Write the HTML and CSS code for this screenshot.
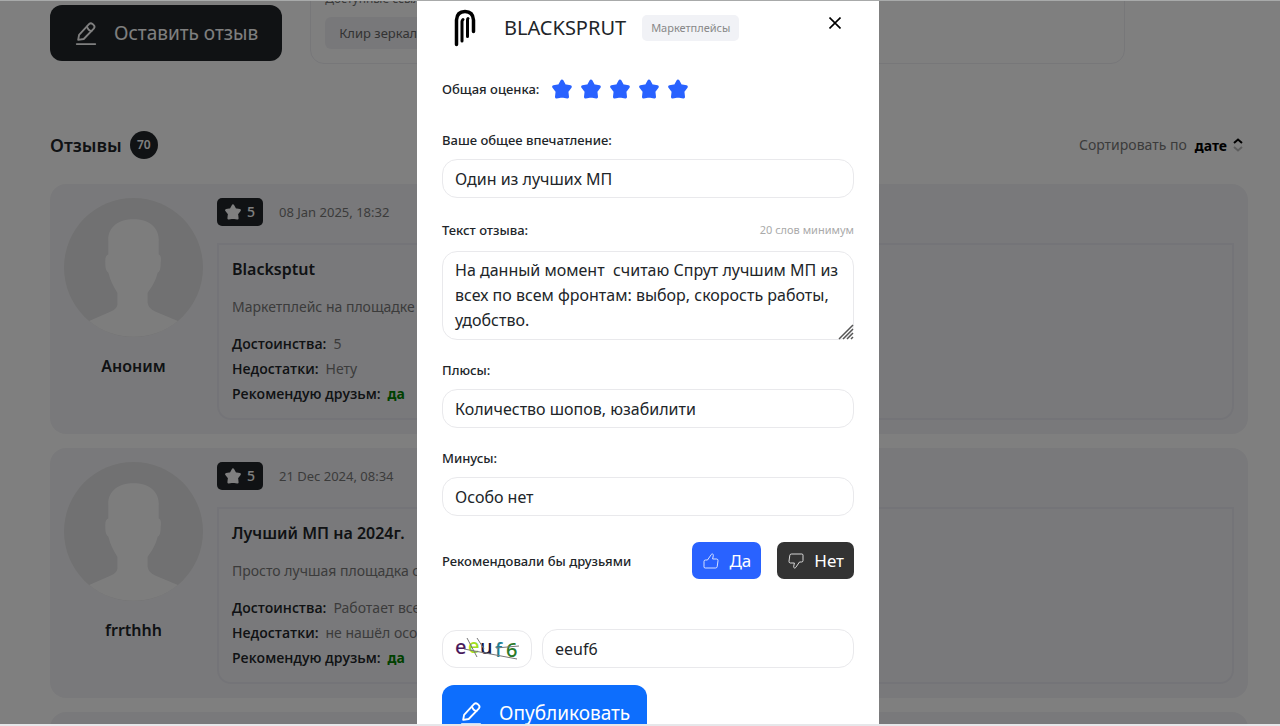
FILE: index.html
```html
<!DOCTYPE html>
<html lang="ru">
<head>
  <meta charset="UTF-8">
  <meta name="viewport" content="width=device-width, initial-scale=1.0">
  <title>BLACKSPRUT - Отзывы</title>
  <link rel="stylesheet" href="styles.css">
</head>
<body>
  <!-- shared icons -->
  <svg class="sprite" aria-hidden="true">
    <symbol id="star" viewBox="0 0 20 20">
      <path d="M10 2 12.6 6.800 18.300 7.800 14.900 12.300 15.500 18 10 17 4.500 18 5.100 12.300 1.700 7.800 7.400 6.800Z" fill="currentColor" stroke="currentColor" stroke-width="3" stroke-linejoin="round"/>
    </symbol>
    <symbol id="pencil" viewBox="0 0 24 26">
      <g fill="none" stroke="currentColor" stroke-width="2" stroke-linecap="round" stroke-linejoin="round">
        <path d="M3.5 20.5 4.5 15 15.5 3.2Q17.2 1.6 19 3.2L20.6 4.8Q22 6.4 20.4 8.2L9.5 19.5Z"/>
        <path d="M13 6Q14.5 10.5 18 11"/>
        <path d="M2 25H22"/>
      </g>
    </symbol>
    <symbol id="thumb" viewBox="0 0 16 16">
      <path d="M1 8.500Q1 7 2.500 7H4.500L8.300 1.500Q8.700.8 9.500 1 10.600 1.300 10.300 2.600L9.600 6H13.600Q15.200 6.200 15 7.700L14.200 13.600Q14 15 12.500 15H2.200Q1 15 1 13.800Z" fill="none" stroke="currentColor" stroke-opacity="0.8" stroke-linejoin="round"/>
    </symbol>
    <symbol id="person" viewBox="0 0 138 138">
      <circle cx="69" cy="69" r="69" fill="#e2e2e4"/>
      <path d="M44 43C43 29 54 21 69 21S95 29 94 43V56Q97 57 96 64 96 73 93 74C91 83 86 90 83 94V104Q84 110 91 113L113 122A69 69 0 0 1 25 122L46 113Q54 110 53 104V94C49 88 46 82 44 74 41 72 41 67 41 62Q41 57 44 56Z" fill="#fbfbfb"/>
    </symbol>
  </svg>

  <main class="page">
    <div class="top">
      <button class="write-btn" type="button"><svg class="pencil"><use href="#pencil"/></svg>Оставить отзыв</button>
      <div class="links">
        <span>Доступные ссылки</span>
        <a class="mirror" href="#">Клир зеркало</a>
      </div>
    </div>

    <div class="reviews-head">
      <h2>Отзывы</h2>
      <span class="count">70</span>
      <div class="sort">Сортировать по
        <button type="button">дате
          <svg width="10" height="14" viewBox="0 0 10 14" fill="none" stroke-width="2">
            <path d="M1 5 5 1.5 9 5" stroke="#000"/>
            <path d="M1 9 5 12.5 9 9" stroke="#bbb"/>
          </svg>
        </button>
      </div>
    </div>

    <article class="review">
      <div class="author">
        <svg class="avatar"><use href="#person"/></svg>
        <b>Аноним</b>
      </div>
      <div class="content">
        <div class="meta"><span class="badge"><svg><use href="#star"/></svg>5</span><time>08 Jan 2025, 18:32</time></div>
        <div class="quote">
          <h3>Blacksptut</h3>
          <p>Маркетплейс на площадке с хорошим выбором</p>
          <div><b>Достоинства:</b>5</div>
          <div><b>Недостатки:</b>Нету</div>
          <div><b>Рекомендую друзьм:</b><span class="yes">да</span></div>
        </div>
      </div>
    </article>

    <article class="review">
      <div class="author">
        <svg class="avatar"><use href="#person"/></svg>
        <b>frrthhh</b>
      </div>
      <div class="content">
        <div class="meta"><span class="badge"><svg><use href="#star"/></svg>5</span><time>21 Dec 2024, 08:34</time></div>
        <div class="quote">
          <h3>Лучший МП на 2024г.</h3>
          <p>Просто лучшая площадка со всех сторон</p>
          <div><b>Достоинства:</b>Работает всегда</div>
          <div><b>Недостатки:</b>не нашёл особых</div>
          <div><b>Рекомендую друзьм:</b><span class="yes">да</span></div>
        </div>
      </div>
    </article>

    <article class="review"></article>
  </main>

  <div class="overlay">
    <form class="modal" role="dialog" aria-labelledby="modalTitle">
      <div class="modal-head">
        <svg class="logo" width="22" height="38" viewBox="0 0 22 38" fill="none" stroke="#000" stroke-linecap="round">
          <path d="M2.500 35.500V11Q3 2.500 11 2.500T19.500 11V22.500" stroke-width="3.500"/>
          <path d="M8 32V12.500Q8 11.500 9 10.500" stroke-width="3"/>
          <path d="M13.500 27.500V11Q13.500 10 14 9.500" stroke-width="3"/>
        </svg>
        <h1 id="modalTitle">BLACKSPRUT</h1>
        <span class="tag">Маркетплейсы</span>
        <button class="close" type="button" aria-label="Закрыть">
          <svg width="12" height="12" viewBox="0 0 12 12" stroke="#000" stroke-width="1.6"><path d="M0.5 0.5 11.5 11.5M11.5 0.5 0.5 11.5"/></svg>
        </button>
      </div>

      <div class="rate">
        <span class="label">Общая оценка:</span>
        <div class="stars">
          <button type="button" aria-label="1"><svg><use href="#star"/></svg></button>
          <button type="button" aria-label="2"><svg><use href="#star"/></svg></button>
          <button type="button" aria-label="3"><svg><use href="#star"/></svg></button>
          <button type="button" aria-label="4"><svg><use href="#star"/></svg></button>
          <button type="button" aria-label="5"><svg><use href="#star"/></svg></button>
        </div>
      </div>

      <div class="field">
        <label class="label" for="summary">Ваше общее впечатление:</label>
        <input type="text" id="summary" value="Один из лучших МП">
      </div>

      <div class="field">
        <div class="label-row">
          <label class="label" for="text">Текст отзыва:</label>
          <span class="hint">20 слов минимум</span>
        </div>
        <div class="area">
          <textarea id="text" rows="3" spellcheck="false">На данный момент  считаю Спрут лучшим МП из всех по всем фронтам: выбор, скорость работы, удобство.</textarea>
          <svg class="grip" width="16" height="16" viewBox="0 0 16 16" stroke="#555" stroke-width="1.5"><path d="M1 15 15 1M5 15 15 5M9 15 15 9M13 15 15 13"/></svg>
        </div>
      </div>

      <div class="field">
        <label class="label" for="pros">Плюсы:</label>
        <input type="text" id="pros" value="Количество шопов, юзабилити">
      </div>

      <div class="field">
        <label class="label" for="cons">Минусы:</label>
        <input type="text" id="cons" value="Особо нет">
      </div>

      <div class="recommend">
        <span class="label">Рекомендовали бы друзьями</span>
        <button class="vote vote-yes" type="button"><svg><use href="#thumb"/></svg>Да</button>
        <button class="vote vote-no" type="button"><svg class="down"><use href="#thumb"/></svg>Нет</button>
      </div>

      <div class="captcha">
        <div class="captcha-img">
          <svg width="66" height="26" viewBox="0 0 66 26">
            <g class="captcha-text">
              <text x="1" y="18" fill="#4a1a5c">e</text>
              <text x="14" y="17" fill="#a0e020">e</text>
              <text x="26" y="18" fill="#17153c">u</text>
              <text x="41" y="21" fill="#1f7f93">f</text>
              <text x="52" y="21" fill="#2a7a2a">6</text>
            </g>
            <path d="M10 13 63 23M13 2 23 21M23 2 30 13M42 12 65 10" fill="none" stroke="#777"/>
          </svg>
        </div>
        <input type="text" aria-label="Код с картинки" value="eeuf6">
      </div>

      <button class="submit" type="submit"><svg class="pencil"><use href="#pencil"/></svg>Опубликовать</button>
    </form>
  </div>
</body>
</html>
```
FILE: styles.css
```css
* {
  box-sizing: border-box;
}
body {
  margin: 0;
  height: 100vh;
  overflow: hidden;
  background: #fff;
  color: #212529;
  font-family: "Noto Sans", "Open Sans", sans-serif;
  font-size: 14px;
  line-height: 20px;
}
h1, h2, h3, p {
  margin: 0;
}
button, input, textarea {
  font-family: inherit;
  color: inherit;
  margin: 0;
}
button {
  border: none;
  background: none;
  padding: 0;
  cursor: pointer;
}
.sprite {
  display: none;
}

/* page */
.page {
  height: 100%;
  overflow: hidden;
  padding: 0 32px 0 50px;
}
.top {
  display: flex;
  align-items: flex-end;
  gap: 28px;
  height: 64px;
  margin-bottom: 65px;
}
.write-btn, .submit {
  display: flex;
  align-items: center;
  gap: 16px;
  height: 56px;
  padding: 0 24px;
  border-radius: 12px;
  background: #212529;
  color: #fff;
  font-size: 19px;
  white-space: nowrap;
}
.write-btn {
  margin-bottom: 3px;
}
.pencil {
  width: 24px;
  height: 24px;
}
.links {
  flex: 1;
  display: flex;
  flex-direction: column;
  align-items: flex-start;
  gap: 8px;
  margin-right: 123px;
  padding: 14px;
  border: 1px solid #eeeef3;
  border-radius: 14px;
  font-size: 12px;
  color: #777;
}
.mirror {
  padding: 6px 14px;
  border-radius: 6px;
  background: #f1f1f5;
  color: #666;
  font-size: 13px;
  text-decoration: none;
}
.reviews-head {
  display: flex;
  align-items: center;
  gap: 8px;
  height: 32px;
  margin-bottom: 23px;
}
.reviews-head h2 {
  font-size: 18px;
  font-weight: 600;
}
.count {
  width: 28px;
  height: 28px;
  border-radius: 50%;
  background: #212529;
  color: #fff;
  font-size: 12px;
  font-weight: 600;
  line-height: 28px;
  text-align: center;
}
.sort {
  display: flex;
  gap: 8px;
  margin-left: auto;
  padding-right: 5px;
  color: #777;
}
.sort button {
  display: flex;
  align-items: center;
  gap: 6px;
  color: #000;
  font-size: 14px;
  font-weight: 700;
}

.review {
  display: flex;
  gap: 14px;
  min-height: 250px;
  margin-bottom: 14px;
  padding: 14px;
  border-radius: 16px;
  background: #f3f3f6;
}
.author {
  display: flex;
  flex-direction: column;
  align-items: center;
  gap: 19px;
  font-size: 16px;
}
.author b {
  font-weight: 600;
}
.avatar {
  width: 139px;
  height: 139px;
}
.content {
  flex: 1;
}
.meta {
  display: flex;
  align-items: center;
  gap: 16px;
  margin-bottom: 17px;
  color: #777;
  font-size: 13px;
}
.badge {
  display: flex;
  align-items: center;
  gap: 6px;
  height: 28px;
  padding: 0 8px;
  border-radius: 5px;
  background: #212529;
  color: #fff;
  font-size: 14px;
  font-weight: 500;
}
.badge svg {
  width: 16px;
  height: 16px;
}
.quote {
  padding: 12px 13px;
  border: 2px solid #e9e9f0;
  border-radius: 0 0 14px 14px;
  color: #777;
  line-height: 25px;
}
.quote h3 {
  margin-bottom: 12px;
  color: #212529;
  font-size: 16px;
  font-weight: 600;
}
.quote p {
  margin-bottom: 12px;
}
.quote b {
  margin-right: 7px;
  color: #212529;
  font-family: "Open Sans", sans-serif;
  font-weight: 600;
}
.quote .yes {
  color: #008000;
  font-weight: 700;
}

/* modal */
.overlay {
  position: fixed;
  inset: 0;
  display: flex;
  justify-content: center;
  overflow: hidden;
  padding-left: 16px;
  border-top: 1px solid #a8aaaa;
  border-bottom: 2px solid #e6e7ea;
  background: rgba(0, 0, 0, 0.5);
  background-clip: padding-box;
}
.modal {
  width: 100%;
  max-width: 462px;
  min-height: 100%;
  align-self: flex-start;
  padding: 8px 25px 24px;
  background: #fff;
}
.label {
  font-size: 13px;
  font-weight: 500;
}
.modal-head {
  display: flex;
  align-items: center;
  height: 38px;
  margin-bottom: 32px;
  padding: 0 13px 0 12px;
}
.modal-head h1 {
  margin: 0 16px 0 28px;
  font-size: 20px;
  font-weight: 400;
}
.tag {
  padding: 3px 9px;
  border-radius: 5px;
  background: #f1f2f6;
  color: #888;
  font-size: 11px;
}
.close {
  display: flex;
  align-self: flex-start;
  margin: 8px 0 0 auto;
}
.rate {
  display: flex;
  align-items: center;
  gap: 13px;
  margin-bottom: 31px;
}
.stars {
  display: flex;
  gap: 9px;
  color: #2962ff;
}
.stars svg {
  display: block;
  width: 20px;
  height: 20px;
}
.field {
  display: flex;
  flex-direction: column;
  gap: 9px;
  margin-bottom: 20px;
}
.label-row {
  display: flex;
  align-items: center;
  justify-content: space-between;
  height: 24px;
}
.hint {
  color: #aaa;
  font-size: 11px;
}
.modal input, .modal textarea {
  width: 100%;
  height: 39px;
  padding: 0 12px;
  border: 1px solid #e9e9ec;
  border-radius: 15px;
  outline: none;
  background: #fff;
  font-size: 16px;
}
.area {
  position: relative;
}
.modal textarea {
  display: block;
  height: 89px;
  padding: 6px 12px;
  line-height: 25px;
  overflow: hidden;
  resize: none;
}
.grip {
  position: absolute;
  right: 0;
  bottom: 0;
}
.recommend {
  display: flex;
  align-items: center;
  gap: 16px;
  margin: 26px 0 50px;
}
.recommend .label {
  flex: 1;
}
.vote {
  display: flex;
  align-items: center;
  gap: 10px;
  height: 37px;
  padding: 0 10px 0 11px;
  border-radius: 7px;
  color: #fff;
  font-size: 17px;
}
.vote svg {
  width: 16px;
  height: 16px;
}
.vote-yes {
  background: #2962ff;
}
.vote-no {
  background: #333;
}
.down {
  transform: rotate(180deg);
}
.captcha {
  display: flex;
  align-items: center;
  gap: 10px;
  margin-bottom: 17px;
}
.captcha-img {
  flex: none;
  display: flex;
  padding: 5px 11px;
  border: 1px solid #e9e9ec;
  border-radius: 14px;
}
.captcha-text {
  font-family: "Noto Sans", sans-serif;
  font-size: 20px;
  font-weight: 500;
}
.submit {
  padding: 0 17px;
  background: #0d6efd;
}
```
